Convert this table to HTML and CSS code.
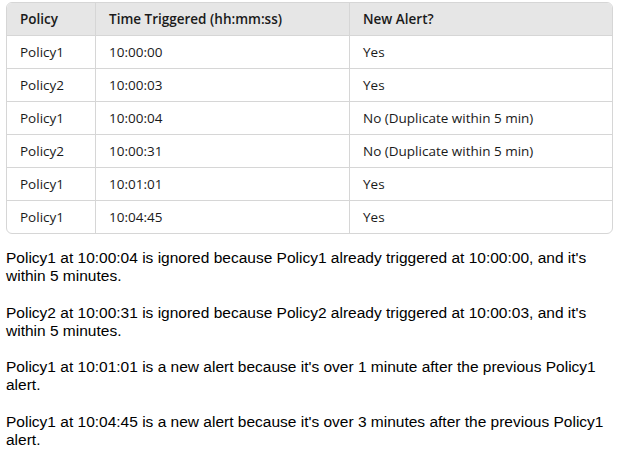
FILE: index.html
```html
<!DOCTYPE html>
<html>
<head>
<meta charset="utf-8">
<link rel="stylesheet" href="styles.css">
</head>
<body>
<div class="page">
  <div class="table-wrap">
    <table class="alerts">
      <thead>
        <tr><th class="c1">Policy</th><th class="c2">Time Triggered (hh:mm:ss)</th><th>New Alert?</th></tr>
      </thead>
      <tbody>
        <tr><td>Policy1</td><td>10:00:00</td><td>Yes</td></tr>
        <tr><td>Policy2</td><td>10:00:03</td><td>Yes</td></tr>
        <tr><td>Policy1</td><td>10:00:04</td><td>No (Duplicate within 5 min)</td></tr>
        <tr><td>Policy2</td><td>10:00:31</td><td>No (Duplicate within 5 min)</td></tr>
        <tr><td>Policy1</td><td>10:01:01</td><td>Yes</td></tr>
        <tr><td>Policy1</td><td>10:04:45</td><td>Yes</td></tr>
      </tbody>
    </table>
  </div>
  <div class="notes">
    <p>Policy1 at 10:00:04 is ignored because Policy1 already triggered at 10:00:00, and it's within 5 minutes.</p>
    <p>Policy2 at 10:00:31 is ignored because Policy2 already triggered at 10:00:03, and it's within 5 minutes.</p>
    <p>Policy1 at 10:01:01 is a new alert because it's over 1 minute after the previous Policy1 alert.</p>
    <p>Policy1 at 10:04:45 is a new alert because it's over 3 minutes after the previous Policy1 alert.</p>
  </div>
</div>
</body>
</html>
```
FILE: styles.css
```css
html, body {
  margin: 0;
  padding: 0;
  background: #ffffff;
}
.page {
  padding: 2px 4px 0 6px;
  width: 607px;
}
.table-wrap {
  border: 1px solid #d6d6d6;
  border-radius: 6px;
  overflow: hidden;
}
.alerts {
  width: 100%;
  border-collapse: collapse;
  font-family: "Open Sans", "Noto Sans", sans-serif;
  font-size: 13.5px;
  color: #1a1a1a;
}
.alerts th {
  background: #e6e6e6;
  font-weight: 600;
  text-align: left;
  height: 32px;
  padding: 0 13px;
  border-left: 1px solid #d6d6d6;
  border-bottom: 1px solid #d6d6d6;
}
.alerts td {
  height: 32px;
  padding: 0 13px;
  border-left: 1px solid #d6d6d6;
  border-top: 1px solid #d6d6d6;
}
.alerts th:first-child, .alerts td:first-child { border-left: none; }
.alerts thead + tbody tr:first-child td { border-top: none; }
.c1 { width: 62px; }
.c2 { width: 227px; }
.notes {
  font-family: "Liberation Sans", Arial, sans-serif;
  font-size: 15.5px;
  line-height: 18px;
  color: #000;
  padding-top: 15px;
}
.notes p {
  margin: 0 0 18.5px 0;
}
```
